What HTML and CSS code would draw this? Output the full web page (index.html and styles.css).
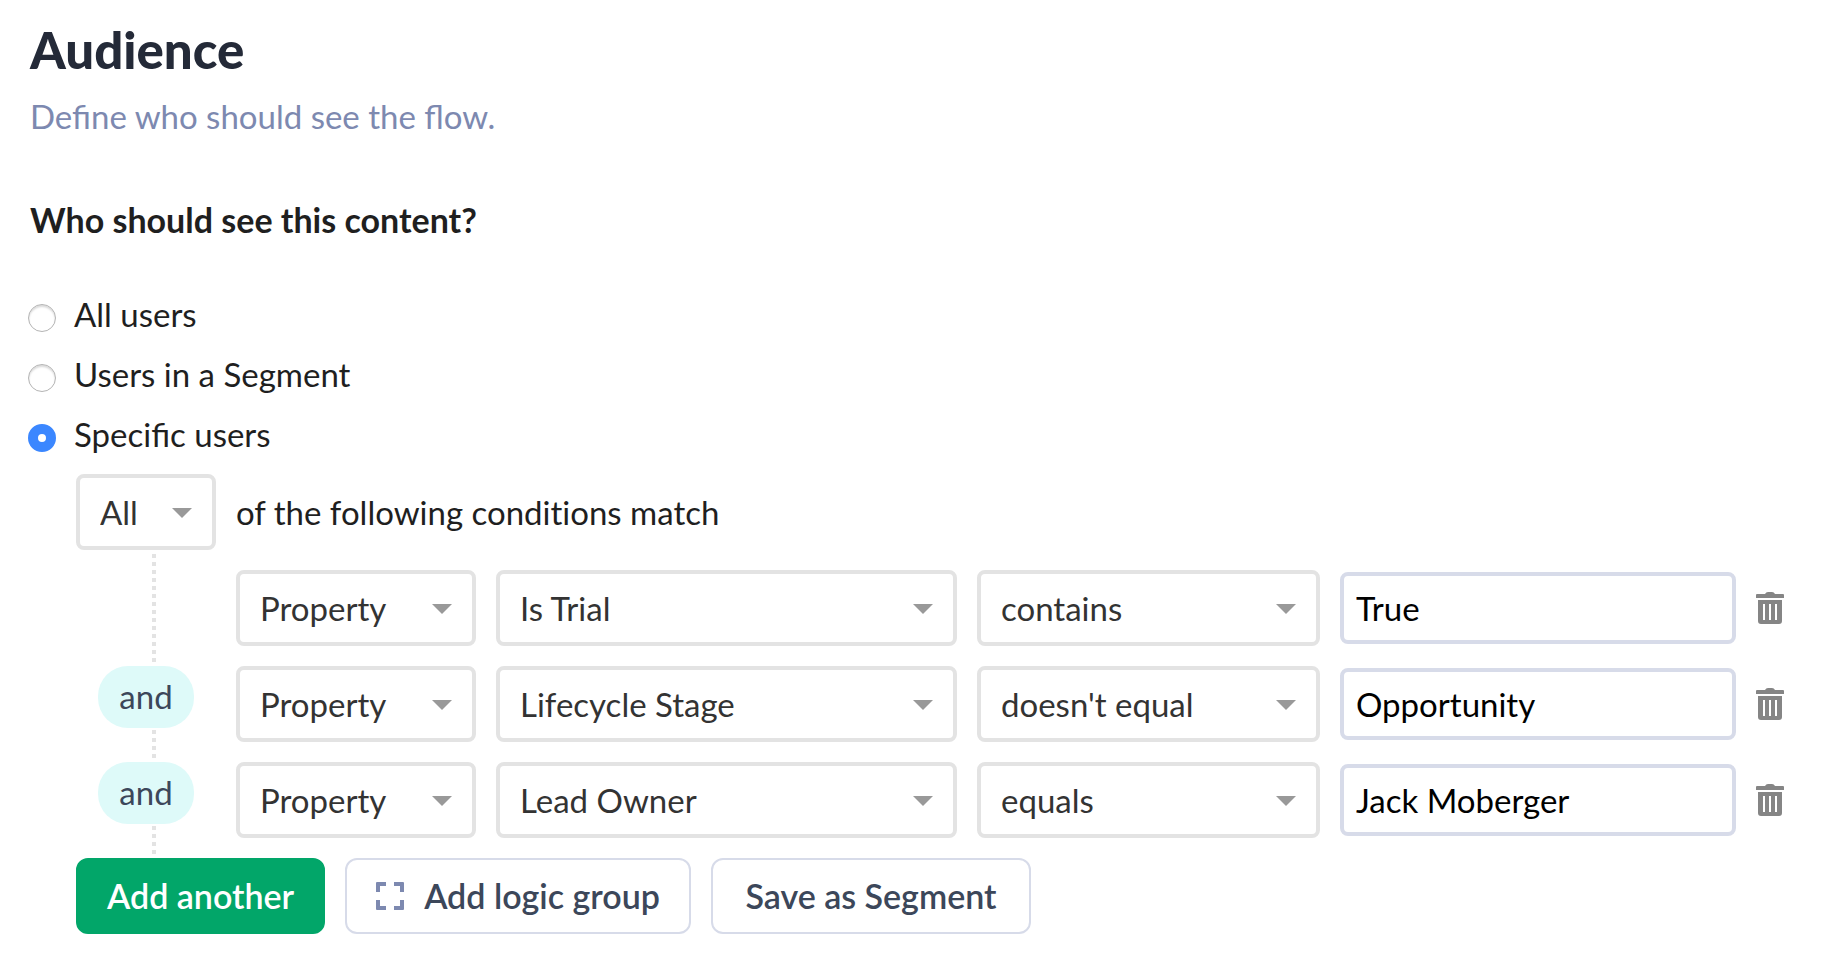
FILE: index.html
```html
<!DOCTYPE html>
<html lang="en">
<head>
    <meta charset="UTF-8">
    <meta name="viewport" content="width=device-width, initial-scale=1.0">
    <title>Audience</title>
    <link rel="stylesheet" href="styles.css">
</head>
<body>

    <!-- Trash icon shared by the rows -->
    <svg class="sprite" aria-hidden="true">
        <symbol id="trash" viewBox="0 0 28 32">
            <path fill-rule="evenodd" d="M0 3q0-1 1-1h8q1-2 3-2h4q2 0 3 2h8q1 0 1 1v3H0zM2 8h24v21q0 3-3 3H5q-3 0-3-3zM7 12v16h2V12zM13 12v16h2V12zM19 12v16h2V12z"/>
        </symbol>
    </svg>

    <main class="audience">
        <h1 class="title">Audience</h1>
        <p class="subtitle">Define who should see the flow.</p>

        <form>
            <h2 class="question" id="question">Who should see this content?</h2>

            <div class="options" role="radiogroup" aria-labelledby="question">
                <label class="option"><input type="radio" name="audience" value="all">All users</label>
                <label class="option"><input type="radio" name="audience" value="segment">Users in a Segment</label>
                <label class="option"><input type="radio" name="audience" value="specific" checked>Specific users</label>
            </div>

            <div class="builder">
                <div class="match">
                    <select class="select match-select" id="match">
                        <option>All</option>
                        <option>Any</option>
                    </select>
                    <label class="match-label" for="match">of the following conditions match</label>
                </div>

                <!-- Conditions -->
                <div class="conditions">
                    <div class="condition">
                        <select class="select first" aria-label="Condition type"><option>Property</option></select>
                        <select class="select" aria-label="Property name"><option>Is Trial</option></select>
                        <select class="select" aria-label="Operator"><option>contains</option></select>
                        <input class="value" type="text" value="True" aria-label="Value">
                        <button class="delete" type="button" aria-label="Delete condition"><svg><use href="#trash"/></svg></button>
                    </div>
                    <div class="condition">
                        <span class="and">and</span>
                        <select class="select" aria-label="Condition type"><option>Property</option></select>
                        <select class="select" aria-label="Property name"><option>Lifecycle Stage</option></select>
                        <select class="select" aria-label="Operator"><option>doesn't equal</option></select>
                        <input class="value" type="text" value="Opportunity" aria-label="Value">
                        <button class="delete" type="button" aria-label="Delete condition"><svg><use href="#trash"/></svg></button>
                    </div>
                    <div class="condition">
                        <span class="and">and</span>
                        <select class="select" aria-label="Condition type"><option>Property</option></select>
                        <select class="select" aria-label="Property name"><option>Lead Owner</option></select>
                        <select class="select" aria-label="Operator"><option>equals</option></select>
                        <input class="value" type="text" value="Jack Moberger" aria-label="Value">
                        <button class="delete" type="button" aria-label="Delete condition"><svg><use href="#trash"/></svg></button>
                    </div>
                </div>

                <!-- Buttons -->
                <div class="actions">
                    <button class="button primary" type="button">Add another</button>
                    <button class="button" type="button">
                        <svg class="group-icon" viewBox="0 0 28 28" aria-hidden="true">
                            <path d="M1 0h9v4H4v6H0V1q0-1 1-1zM18 0h9q1 0 1 1v9h-4V4h-6zM0 18h4v6h6v4H1q-1 0-1-1zM24 18h4v9q0 1-1 1h-9v-4h6z"/>
                        </svg>
                        Add logic group
                    </button>
                    <button class="button save" type="button">Save as Segment</button>
                </div>
            </div>
        </form>
    </main>

</body>
</html>
```
FILE: styles.css
```css
* {
    box-sizing: border-box;
}

body {
    margin: 0;
    background-color: white;
    color: #1f1f1f;
    font-family: Lato, sans-serif;
    font-size: 33px;
    line-height: 40px;
}

.sprite {
    display: none;
}

.audience {
    padding: 20px 44px 20px 28px;
}

/* Headings */
.title {
    margin: 0 2px 16px;
    font-size: 51px;
    line-height: 60px;
    font-weight: 900;
    color: #242a38;
}

.subtitle {
    margin: 0 2px 64px;
    color: #7d89b0;
}

.question {
    margin: 0 2px 44px;
    font-size: 34px;
    font-weight: bold;
}

/* Radio options */
.options {
    display: flex;
    flex-direction: column;
    align-items: flex-start;
    margin-bottom: 10px;
}

.option {
    display: flex;
    gap: 18px;
    padding: 10px 0;
}

.option input {
    appearance: none;
    width: 28px;
    height: 28px;
    margin: 10px 0 0;
    border: 1px solid #b4b4b4;
    border-radius: 50%;
    background-color: white;
    box-shadow: inset 0 2px 2px rgba(0, 0, 0, 0.15);
}

.option input:checked {
    border: 10px solid #3b87ff;
    box-shadow: none;
}

/* Condition builder */
.builder {
    padding-left: 48px;
}

.match {
    display: flex;
    align-items: center;
    gap: 20px;
}

.match-label {
    font-variant-ligatures: none;
}

.select {
    appearance: none;
    width: 100%;
    height: 76px;
    padding: 0 52px 0 20px;
    border: 4px solid #e3e3e3;
    border-radius: 8px;
    background: white url("data:image/svg+xml,%3Csvg xmlns='http://www.w3.org/2000/svg' width='20' height='10'%3E%3Cpath d='M0 0h20L10 10z' fill='%23999'/%3E%3C/svg%3E") no-repeat right 20px top 30px;
    color: #333;
    font: inherit;
}

.match-select {
    width: 140px;
}

/* Dotted line that joins the rows */
.conditions {
    display: flex;
    flex-direction: column;
    gap: 20px;
    padding: 20px 0;
    background: linear-gradient(#e3e3e3 50%, transparent 50%) 76px 4px / 4px 8px repeat-y;
}

.condition {
    display: grid;
    grid-template-columns: 140px 240px 461fr 343fr 396fr 28px;
    align-items: center;
    gap: 20px;
}

.first {
    grid-column: 2;
}

.and {
    align-self: start;
    justify-self: center;
    width: 96px;
    padding: 10px 0 12px;
    border-radius: 30px;
    background-color: #defaf9;
    color: #3c475a;
    text-align: center;
}

.value {
    width: 100%;
    height: 72px;
    padding: 0 12px;
    border: 4px solid #d7dbe9;
    border-radius: 8px;
    background-color: white;
    color: black;
    font: inherit;
}

.delete {
    display: flex;
    padding: 0;
    border: none;
    background: none;
    fill: #858585;
    cursor: pointer;
}

.delete svg {
    width: 28px;
    height: 32px;
}

/* Buttons */
.actions {
    display: flex;
    gap: 20px;
}

.button {
    display: flex;
    align-items: center;
    justify-content: center;
    gap: 20px;
    height: 76px;
    padding: 0 29px;
    border: 2px solid #d7dbe9;
    border-radius: 12px;
    background-color: white;
    color: #3c475a;
    font: inherit;
    font-size: 34px;
    font-weight: 600;
    cursor: pointer;
}

.primary {
    border-color: #02a669;
    background-color: #02a669;
    color: white;
}

.save {
    min-width: 320px;
}

.group-icon {
    width: 28px;
    height: 28px;
    fill: #7d89b0;
}
```
